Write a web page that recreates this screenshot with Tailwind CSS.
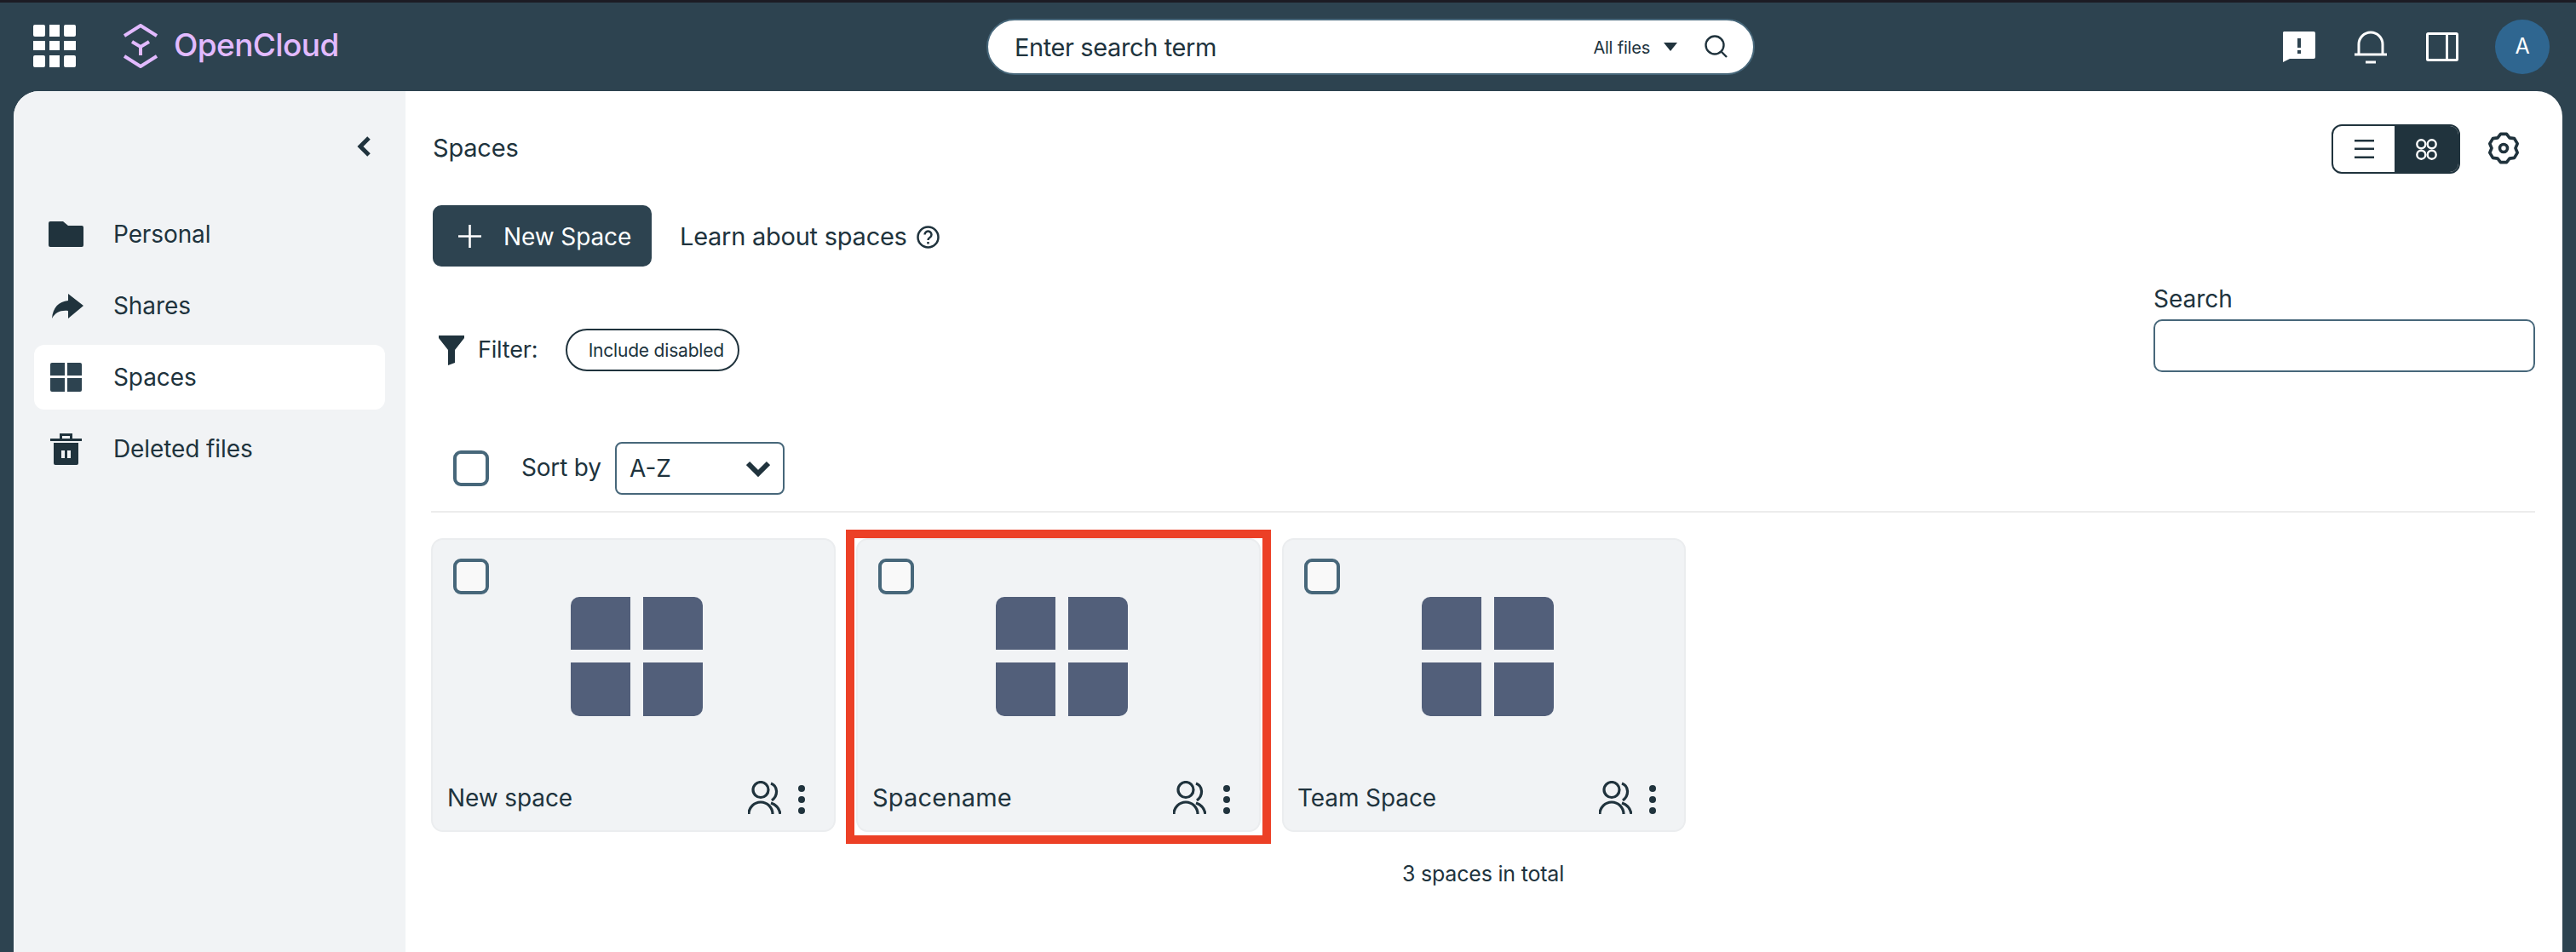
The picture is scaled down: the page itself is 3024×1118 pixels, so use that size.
<!doctype html>
<html>
<head>
<meta charset="utf-8">
<script src="https://cdn.jsdelivr.net/npm/@tailwindcss/browser@4"></script>
</head>
<body class="m-0">
<div class="w-[3024px] h-[1118px] overflow-hidden flex flex-col bg-[#2d4350] text-[#20333d] font-['Inter','Liberation_Sans',sans-serif]">
  <div class="h-[3px] bg-[#1c1c24]"></div>
  <header class="h-[104px] relative flex items-center pl-[39px] pr-[31px]">
    <svg class="w-[50px] h-[50px] mt-[-2px]" viewBox="0 0 50 50" fill="#fff"><rect width="14" height="14" rx="2"/><rect x="19" width="12" height="14"/><rect x="36" width="14" height="14" rx="2"/><rect y="19" width="14" height="11"/><rect x="19" y="19" width="12" height="11"/><rect x="36" y="19" width="14" height="11"/><rect y="36" width="14" height="14" rx="2"/><rect x="19" y="36" width="12" height="14"/><rect x="36" y="36" width="14" height="14" rx="2"/></svg>
    <svg class="ml-[56px] w-[40px] h-[52px] mt-[-2px]" viewBox="0 0 40 52" fill="none" stroke="#e2baff" stroke-width="4"><path d="M1 14 20 2l19 12M1 38l19 12 19-12M10 21l10 6 10-6M20 27v10"/></svg>
    <span class="ml-[19px] text-[37px] leading-none mt-[-6px] text-[#e2baff] font-medium tracking-[-0.6px]">OpenCloud</span>
    <div class="absolute left-[1158px] top-[19px] w-[902px] h-[66px] rounded-full bg-white border-2 border-[#47677a] flex items-center pl-[31px] pr-[30px]">
      <span class="text-[29px] leading-none tracking-[-0.4px] mt-[1px]">Enter search term</span>
      <span class="ml-auto text-[20px] leading-none tracking-[-0.2px] mt-[1px]">All files</span>
      <svg class="ml-[16px] w-[16px] h-[10px]" viewBox="0 0 16 10" fill="#20333d"><path d="M0 0h16L8 10z"/></svg>
      <svg class="ml-[32px] w-[28px] h-[28px] mr-[-1px]" viewBox="0 0 28 28" fill="none" stroke="#20333d" stroke-width="2.4"><circle cx="12" cy="12" r="10.5"/><path d="m19.5 19.5 6.5 6.5"/></svg>
    </div>
    <div class="ml-auto flex items-center">
      <svg class="w-[38px] h-[36px]" viewBox="0 0 38 36" fill="#fff"><path d="M1 0h35a2 2 0 0 1 2 2v28a2 2 0 0 1-2 2H8l-8 4V1z"/><path fill="#2d4350" d="M17 8h4v11h-4zM17 22h4v4h-4z"/></svg>
      <svg class="ml-[46px] w-[38px] h-[40px]" viewBox="0 0 38 40" fill="none" stroke="#fff" stroke-width="3"><path d="M5 28V17a14 14 0 0 1 28 0v11M0 29h38M13 38h12"/></svg>
      <svg class="ml-[46px] w-[38px] h-[34px]" viewBox="0 0 38 34" fill="none" stroke="#fff" stroke-width="3"><rect x="1.5" y="1.5" width="35" height="31" rx="1"/><path d="M24.5 1.5v31"/></svg>
      <div class="ml-[43px] w-[64px] h-[64px] rounded-full bg-[#2f6690] text-white text-[25px] flex items-center justify-center">A</div>
    </div>
  </header>
  <div class="flex-1 flex mx-[16px] rounded-t-[30px] overflow-hidden bg-white">
    <aside class="w-[460px] bg-[#f1f3f5] px-[24px] flex flex-col">
      <div class="h-[114px] flex items-end justify-end pr-[17px] pb-[37px]">
        <svg class="w-[16px] h-[24px]" viewBox="0 0 16 24" fill="none" stroke="#20333d" stroke-width="5"><path d="M14 2 4 12l10 10"/></svg>
      </div>
      <nav class="mt-[16px] flex flex-col gap-[8px] text-[28px] tracking-[-0.1px]">
        <a class="h-[76px] rounded-[12px] flex items-center pl-[17px]"><span class="w-[76px]"><svg class="w-[41px] h-[30px]" viewBox="0 0 41 30" fill="#20333d"><path d="M2 0h15l6 5h16a2 2 0 0 1 2 2v21a2 2 0 0 1-2 2H2a2 2 0 0 1-2-2V2a2 2 0 0 1 2-2z"/></svg></span>Personal</a>
        <a class="h-[76px] rounded-[12px] flex items-center pl-[17px]"><span class="w-[76px] pl-[4px]"><svg class="w-[37px] h-[29px]" viewBox="0 0 37 29" fill="#20333d"><path d="M19 0l18 14-18 15v-9C10 19 4 22 0 29 1 16 8 9 19 8z"/></svg></span>Shares</a>
        <a class="h-[76px] rounded-[12px] flex items-center pl-[17px] bg-white"><span class="w-[76px] pl-[2px]"><svg class="w-[37px] h-[34px]" viewBox="0 0 37 34" fill="#2d4350"><path d="M2 0h15v15H0V2a2 2 0 0 1 2-2zM20 0h15a2 2 0 0 1 2 2v13H20zM0 18h17v16H2a2 2 0 0 1-2-2zM20 18h17v14a2 2 0 0 1-2 2H20z"/></svg></span>Spaces</a>
        <a class="h-[76px] rounded-[12px] flex items-center pl-[17px]"><span class="w-[76px] pl-[2px]"><svg class="w-[37px] h-[37px]" viewBox="0 0 37 37" fill="#20333d"><path d="M0 6h37v3H0zM11 0h15v6h-3V3h-9v3h-3zM4 11h29v24a2 2 0 0 1-2 2H6a2 2 0 0 1-2-2z"/><path fill="#f1f3f5" d="M13 20h4v9h-4zM20 20h4v9h-4z"/></svg></span>Deleted files</a>
      </nav>
    </aside>
    <main class="flex-1 relative pl-[30px] pr-[32px] pt-[39px]">
      <div class="flex items-center h-[58px] pl-[2px]">
        <span class="text-[29px] tracking-[-0.2px] mt-[-2px]">Spaces</span>
        <div class="ml-auto flex h-[58px] w-[151px] rounded-[12px] border-2 border-[#20333d] overflow-hidden mr-[88px]">
          <div class="flex-1 flex items-center justify-center"><svg class="w-[23px] h-[22px]" viewBox="0 0 23 22" fill="#20333d"><path d="M0 0h23v2.500H0zM0 9.500h23v2.500H0zM0 19.500h23V22H0z"/></svg></div>
          <div class="w-[75px] bg-[#20333d] flex items-center justify-center"><svg class="w-[25px] h-[25px]" viewBox="0 0 25 25" fill="none" stroke="#fff" stroke-width="2.400"><circle cx="6.300" cy="6.300" r="5"/><circle cx="18.700" cy="6.300" r="5"/><circle cx="6.300" cy="18.700" r="5"/><circle cx="18.700" cy="18.700" r="5"/></svg></div>
        </div>
      </div>
      <svg class="absolute right-[50px] top-[48px] w-[38px] h-[38px]" viewBox="-1 -1 38 38" fill="none" stroke="#20333d" stroke-width="3.600" stroke-linejoin="round"><path d="M14.500 1.400H21.500L25 5.900 30.600 6.600 34.200 12.700 32 18 34.200 23.300 30.600 29.400 25 30.100 21.500 34.600H14.500L11 30.100 5.400 29.400 1.800 23.300 4 18 1.800 12.700 5.400 6.600 11 5.900Z"/><circle cx="18" cy="18" r="4.500"/></svg>
      <div class="mt-[37px] flex items-center h-[72px] pl-[2px]">
        <div class="w-[257px] h-[72px] rounded-[10px] bg-[#2d4350] text-white flex items-center pl-[30px]">
          <svg class="w-[27px] h-[27px]" viewBox="0 0 27 27" fill="#fff"><path d="M12.200 0h2.600v27h-2.600zM0 12.200h27v2.600H0z"/></svg>
          <span class="ml-[26px] text-[28px] tracking-[-0.1px] mt-[1px]">New Space</span>
        </div>
        <span class="ml-[33px] text-[29px] tracking-[-0.25px] mt-[1px]">Learn about spaces</span>
        <svg class="ml-[11px] w-[27px] h-[27px] mt-[2px]" viewBox="0 0 27 27" fill="none" stroke="#20333d" stroke-width="2.500"><circle cx="13.500" cy="13.500" r="12"/><path d="M9.500 10.500a4 4 0 1 1 6 3.500c-1.500.8-2 1.500-2 3"/><path d="M13.500 19v2.500"/></svg>
      </div>
      <div class="mt-[23px] h-[101px] flex">
        <div class="self-end h-[50px] flex items-center pl-[9px] mb-[1px]">
          <svg class="w-[30px] h-[35px]" viewBox="0 0 30 35" fill="#20333d"><path d="M0 0h30v3L19 17v15l-8 3V17L0 3z"/></svg>
          <span class="ml-[16px] text-[27px] tracking-[-0.2px] mt-[1px]">Filter:</span>
          <div class="ml-[33px] w-[204px] h-[50px] rounded-full border-2 border-[#20333d] flex items-center justify-center text-[21px] tracking-[-0.2px] pl-[8px]"><span class="mt-[1px]">Include disabled</span></div>
        </div>
        <div class="ml-auto w-[448px]">
          <div class="text-[28px] leading-[39px] mt-[-4px] mb-[4px]">Search</div>
          <div class="h-[62px] rounded-[10px] border-2 border-[#47677a]"></div>
        </div>
      </div>
      <div class="mt-[82px] h-[62px] flex items-center pl-[26px]">
        <div class="w-[42px] h-[42px] rounded-[9px] border-[4px] border-[#47677a]"></div>
        <span class="w-[110px] ml-[38px] text-[28px] tracking-[-0.2px] mt-[-2px]">Sort by</span>
        <div class="w-[199px] h-[62px] rounded-[8px] border-2 border-[#47677a] flex items-center pl-[15px] pr-[15px] text-[28px]">
          <span>A-Z</span>
          <svg class="ml-auto w-[28px] h-[19px]" viewBox="0 0 28 19" fill="none" stroke="#20333d" stroke-width="6"><path d="M2 3l12 12L26 3"/></svg>
        </div>
      </div>
      <div class="mt-[19px] h-[2px] bg-[#ececec]"></div>
      <div class="mt-[30px] grid grid-cols-[475px_475px_475px] gap-[24px]">
        <article class="relative h-[345px] rounded-[14px] bg-[#f1f3f5] border-2 border-[#ebedef]">
          <div class="absolute left-[24px] top-[22px] w-[42px] h-[42px] rounded-[9px] border-[4px] border-[#47677a] bg-[#f9f9f9]"></div>
          <svg class="absolute left-[162px] top-[67px] w-[155px] h-[140px]" viewBox="0 0 155 140" fill="#525f7a"><path d="M10 0h60v62H0V10A10 10 0 0 1 10 0zM85 0h60a10 10 0 0 1 10 10v52H85zM0 77h70v63H10a10 10 0 0 1-10-10zM85 77h70v53a10 10 0 0 1-10 10H85z"/></svg>
          <span class="absolute left-[17px] bottom-[18px] text-[28px] leading-[40px] tracking-[-0.1px]">New space</span>
          <svg class="absolute left-[370px] top-[283px] w-[39px] h-[39px]" viewBox="0 0 39 39" fill="none" stroke="#20333d" stroke-width="3.200"><circle cx="15" cy="10.500" r="9"/><path d="M1 39a14 14 0 0 1 28 0M27 3c8 3 9 14 1 20M27 26c6 2 10 7 11 13"/></svg>
          <svg class="absolute left-[426px] top-[288px] w-[14px] h-[34px]" viewBox="0 0 14 34" fill="#20333d"><circle cx="7" cy="4" r="4"/><circle cx="7" cy="17" r="4"/><circle cx="7" cy="30" r="4"/></svg>
        </article>
        <article class="relative h-[345px] rounded-[14px] bg-[#f1f3f5] border-2 border-[#ebedef]">
          <div class="absolute left-[24px] top-[22px] w-[42px] h-[42px] rounded-[9px] border-[4px] border-[#47677a] bg-[#f9f9f9]"></div>
          <svg class="absolute left-[162px] top-[67px] w-[155px] h-[140px]" viewBox="0 0 155 140" fill="#525f7a"><path d="M10 0h60v62H0V10A10 10 0 0 1 10 0zM85 0h60a10 10 0 0 1 10 10v52H85zM0 77h70v63H10a10 10 0 0 1-10-10zM85 77h70v53a10 10 0 0 1-10 10H85z"/></svg>
          <span class="absolute left-[17px] bottom-[18px] text-[29px] leading-[40px] tracking-[0.2px]">Spacename</span>
          <svg class="absolute left-[370px] top-[283px] w-[39px] h-[39px]" viewBox="0 0 39 39" fill="none" stroke="#20333d" stroke-width="3.200"><circle cx="15" cy="10.500" r="9"/><path d="M1 39a14 14 0 0 1 28 0M27 3c8 3 9 14 1 20M27 26c6 2 10 7 11 13"/></svg>
          <svg class="absolute left-[426px] top-[288px] w-[14px] h-[34px]" viewBox="0 0 14 34" fill="#20333d"><circle cx="7" cy="4" r="4"/><circle cx="7" cy="17" r="4"/><circle cx="7" cy="30" r="4"/></svg>
          <div class="absolute left-[-14px] top-[-12px] w-[499px] h-[369px] border-[10px] border-[#ec4026]"></div>
        </article>
        <article class="relative h-[345px] ml-[1px] rounded-[14px] bg-[#f1f3f5] border-2 border-[#ebedef]">
          <div class="absolute left-[24px] top-[22px] w-[42px] h-[42px] rounded-[9px] border-[4px] border-[#47677a] bg-[#f9f9f9]"></div>
          <svg class="absolute left-[162px] top-[67px] w-[155px] h-[140px]" viewBox="0 0 155 140" fill="#525f7a"><path d="M10 0h60v62H0V10A10 10 0 0 1 10 0zM85 0h60a10 10 0 0 1 10 10v52H85zM0 77h70v63H10a10 10 0 0 1-10-10zM85 77h70v53a10 10 0 0 1-10 10H85z"/></svg>
          <span class="absolute left-[16px] bottom-[18px] text-[28px] leading-[40px] tracking-[-0.1px]">Team Space</span>
          <svg class="absolute left-[370px] top-[283px] w-[39px] h-[39px]" viewBox="0 0 39 39" fill="none" stroke="#20333d" stroke-width="3.200"><circle cx="15" cy="10.500" r="9"/><path d="M1 39a14 14 0 0 1 28 0M27 3c8 3 9 14 1 20M27 26c6 2 10 7 11 13"/></svg>
          <svg class="absolute left-[426px] top-[288px] w-[14px] h-[34px]" viewBox="0 0 14 34" fill="#20333d"><circle cx="7" cy="4" r="4"/><circle cx="7" cy="17" r="4"/><circle cx="7" cy="30" r="4"/></svg>
        </article>
      </div>
      <div class="mt-[32px] text-center text-[25px] leading-[34px] tracking-[-0.2px]">3 spaces in total</div>
    </main>
  </div>
</div>
</body>
</html>
